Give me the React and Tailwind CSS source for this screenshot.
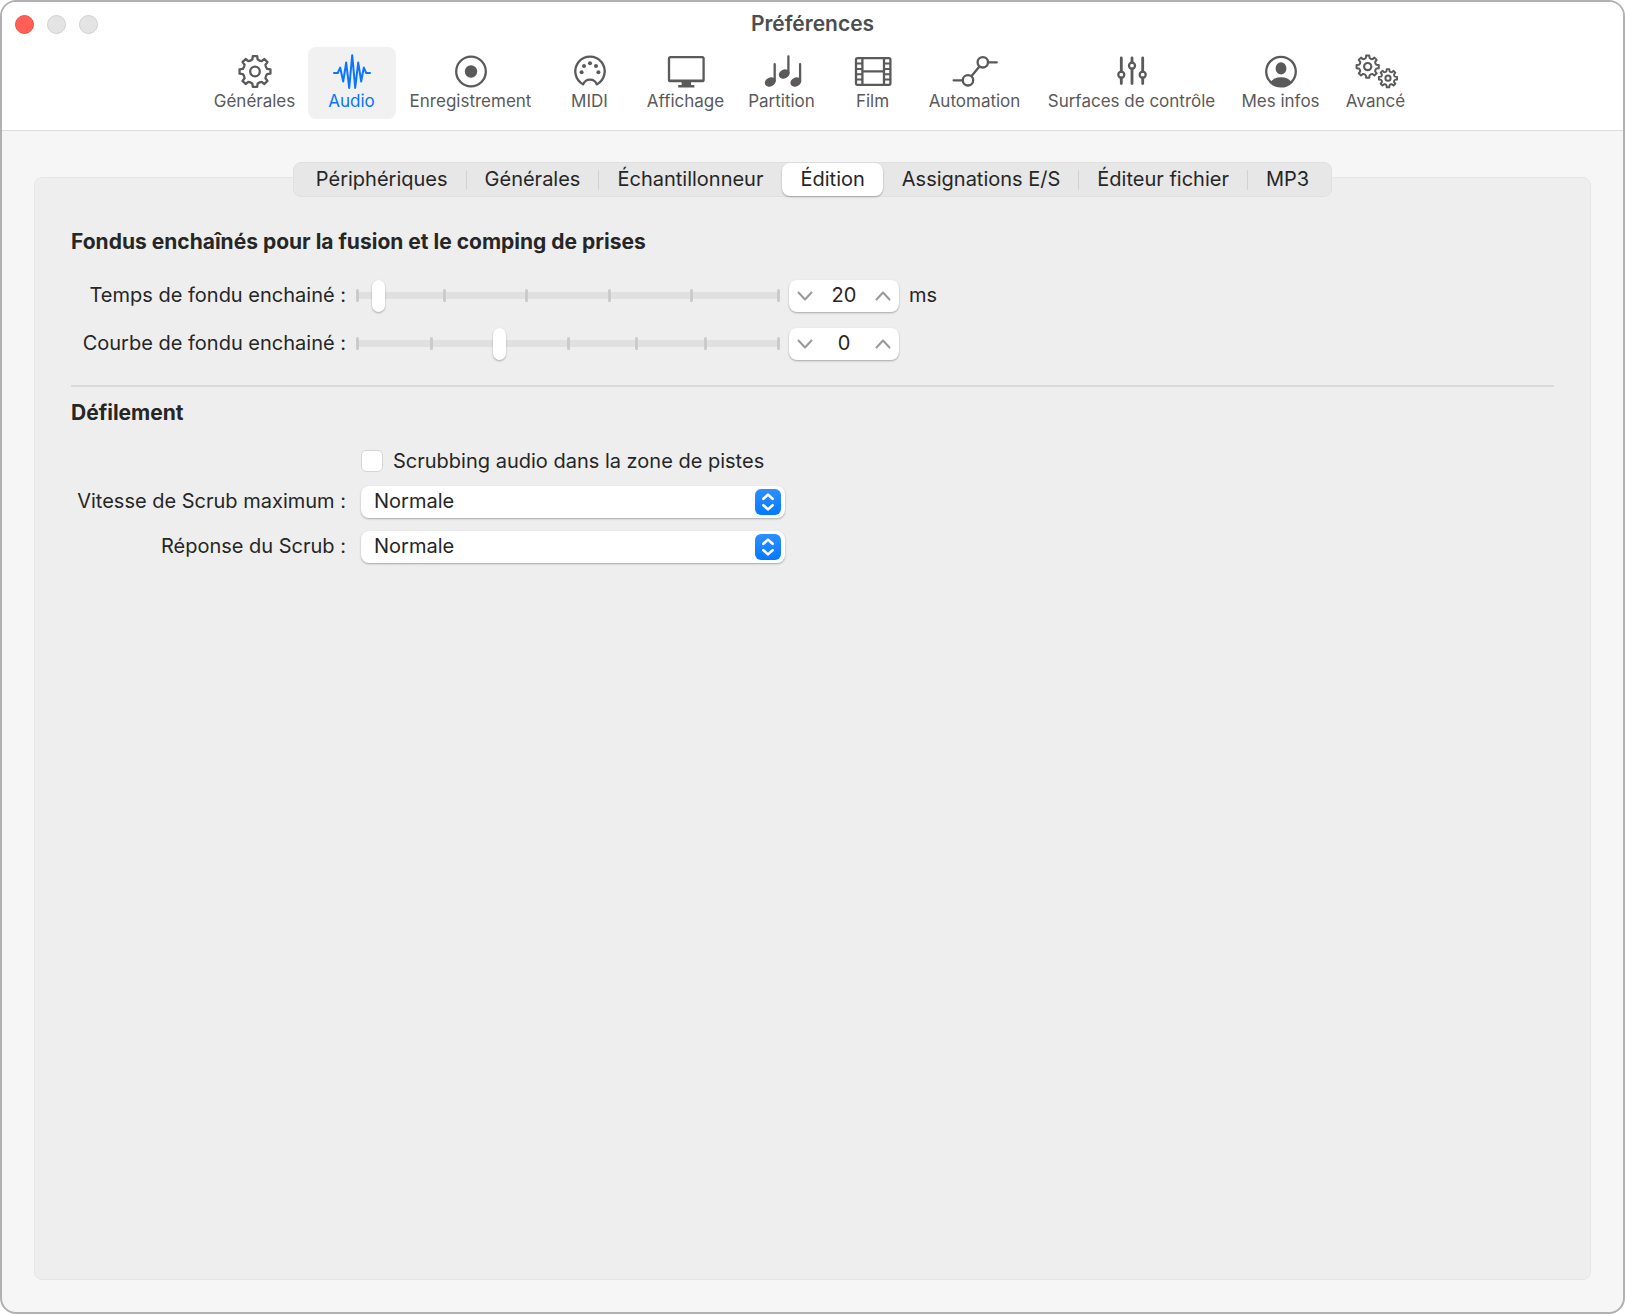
import React, { useState } from "react";

// outline of a cog: one rounded tooth per step, with a curved valley between two teeth
const gearPath = (cx, cy, outer, inner, teeth) => {
    const step = (Math.PI * 2) / teeth
    const point = (angle, r) => `${(cx + Math.sin(angle) * r).toFixed(2)} ${(cy - Math.cos(angle) * r).toFixed(2)}`
    let d = ""
    for (let i = 0; i < teeth; i++) {
        const a = i * step
        d += `${i === 0 ? "M" : "L"}${point(a - step * 0.27, inner)}`
        d += `L${point(a - step * 0.18, outer)}L${point(a + step * 0.18, outer)}`
        d += `L${point(a + step * 0.27, inner)}`
        d += `Q${point(a + step * 0.5, inner - 1)} ${point(a + step * 0.73, inner)}`
    }
    return d + "Z"
}

function Icon({ children }) {
    return (
        <svg className="w-12 h-10" viewBox="0 0 48 40" fill="none" stroke="currentColor" strokeWidth="2.3"
            strokeLinecap="round" strokeLinejoin="round" aria-hidden="true">
            {children}
        </svg>
    );
}

const GearIcon = () => (
    <Icon>
        <path d={gearPath(24, 20.5, 15.6, 12.4, 8)} />
        <circle cx="24" cy="20.5" r="4.8" />
    </Icon>
)

const WaveIcon = () => (
    <Icon>
        <path d="M6 22H9.8L12.2 16.6L15.2 30.5L18.2 11.5L21.2 37L24.2 4.2L27.2 37L30.2 11.5L33.2 30.5L35.8 16.6L38.2 22H42" strokeWidth="2" />
    </Icon>
)

const RecordIcon = () => (
    <Icon>
        <circle cx="24" cy="20.5" r="14.8" />
        <circle cx="24" cy="20.5" r="6.2" fill="currentColor" stroke="none" />
    </Icon>
)

const MidiIcon = () => (
    <Icon>
        <path d="M17.2 33.4A14.7 14.7 0 1 1 30.8 33.4C29.6 30 27.2 28.6 24 28.6C20.8 28.6 18.4 30 17.2 33.4Z" />
        <g fill="currentColor" stroke="none">
            <circle cx="15.6" cy="21.3" r="2" />
            <circle cx="18" cy="14.9" r="2" />
            <circle cx="24" cy="12.3" r="2" />
            <circle cx="30" cy="14.9" r="2" />
            <circle cx="32.4" cy="21.3" r="2" />
        </g>
    </Icon>
)

const DisplayIcon = () => (
    <Icon>
        <rect x="7" y="6.2" width="34.6" height="24" rx="1.5" />
        <path d="M7.5 29.6H41" />
        <path d="M19.6 31H29V34H32.4V36.4H16.2V34H19.6Z" fill="currentColor" stroke="none" />
    </Icon>
)

const NotesIcon = () => (
    <Icon>
        <g fill="currentColor" stroke="none">
            <ellipse cx="12.2" cy="31" rx="5.6" ry="4.4" transform="rotate(-24 12.2 31)" />
            <ellipse cx="26.2" cy="23" rx="5.6" ry="4.4" transform="rotate(-24 26.2 23)" />
            <ellipse cx="37.8" cy="31" rx="5.6" ry="4.4" transform="rotate(-24 37.8 31)" />
        </g>
        <path d="M16.7 13.2V30M30.4 5.4V22M42.1 13.2V30" />
    </Icon>
)

const FilmIcon = () => (
    <Icon>
        <rect x="7" y="7.2" width="34.4" height="26.6" rx="1.5" />
        <path d="M13.4 7.2V33.8M35 7.2V33.8M13.4 20.4H35" />
        <path d="M7 12.6H13M7 17.9H13M7 23.2H13M7 28.5H13M35.4 12.6H41M35.4 17.9H41M35.4 23.2H41M35.4 28.5H41" strokeWidth="2" />
    </Icon>
)

const AutomationIcon = () => (
    <Icon>
        <circle cx="17" cy="29.3" r="5.2" />
        <circle cx="31.8" cy="11.3" r="5.2" />
        <path d="M2.6 29.3H11.8M37 11.3H45.8M20.4 25.2L28.4 15.4" />
    </Icon>
)

const FadersIcon = () => (
    <Icon>
        <path d="M13.3 7V20.6M13.3 26.8V32.6M24 7V11.6M24 17.8V32.6M34.7 7V20.6M34.7 26.8V32.6" strokeWidth="2.8" />
        <circle cx="13.3" cy="23.7" r="3" />
        <circle cx="24" cy="14.7" r="3" />
        <circle cx="34.7" cy="23.7" r="3" />
    </Icon>
)

const PersonIcon = () => (
    <Icon>
        <circle cx="24" cy="20.6" r="14.8" />
        <ellipse cx="24" cy="17.4" rx="5.4" ry="6.2" fill="currentColor" stroke="none" />
        <path d="M13.6 31C15.6 28 19.4 26.2 24 26.2C28.6 26.2 32.4 28 34.4 31C31.8 34 28.2 35.4 24 35.4C19.8 35.4 16.2 34 13.6 31Z" fill="currentColor" stroke="none" />
    </Icon>
)

const AdvancedIcon = () => (
    <Icon>
        <path d={gearPath(15.7, 15.6, 11.2, 8.9, 8)} strokeWidth="2" />
        <circle cx="15.7" cy="15.6" r="3.6" strokeWidth="2.2" />
        <path d={gearPath(36, 27.2, 9.2, 7.2, 8)} strokeWidth="1.9" />
        <circle cx="36" cy="27.2" r="2.6" strokeWidth="2" />
    </Icon>
)

const sections = [
    { label: "Générales", icon: GearIcon, width: "w-[96px]" },
    { label: "Audio", icon: WaveIcon, width: "w-[98px]" },
    { label: "Enregistrement", icon: RecordIcon, width: "w-[140px]" },
    { label: "MIDI", icon: MidiIcon, width: "w-[98px]" },
    { label: "Affichage", icon: DisplayIcon, width: "w-[94px]" },
    { label: "Partition", icon: NotesIcon, width: "w-[98px]" },
    { label: "Film", icon: FilmIcon, width: "w-[84px]" },
    { label: "Automation", icon: AutomationIcon, width: "w-[120px]" },
    { label: "Surfaces de contrôle", icon: FadersIcon, width: "w-[194px]" },
    { label: "Mes infos", icon: PersonIcon, width: "w-[104px]" },
    { label: "Avancé", icon: AdvancedIcon, width: "w-[86px]" },
]

const tabs = ["Périphériques", "Générales", "Échantillonneur", "Édition", "Assignations E/S", "Éditeur fichier", "MP3"]

function Toolbar({ active, onSelect }) {
    return (
        <nav className="flex justify-center pb-[11px]">
            {sections.map(({ label, icon: SectionIcon, width }) => (
                <div key={label} className={`px-[5px] shrink-0 ${width}`}>
                    <button type="button" onClick={() => onSelect(label)}
                        className={`w-full h-[72px] pt-1 flex flex-col items-center rounded-lg text-[17px] leading-5 whitespace-nowrap ${label === active ? "bg-[#f1f1f1] text-[#0a75ff]" : "text-[#5a5a5a]"}`}>
                        <SectionIcon />
                        <span>{label}</span>
                    </button>
                </div>
            ))}
        </nav>
    );
}

function TabBar({ active, onSelect }) {
    const activeIndex = tabs.indexOf(active)
    return (
        <div role="tablist" className="relative z-10 flex h-[35px] px-1 rounded-lg bg-[#e7e7e7] border border-[#e0e0e0]">
            {tabs.map((tab, i) => (
                <React.Fragment key={tab}>
                    {i > 0 && (
                        <span className={`w-px h-5 self-center ${i === activeIndex || i === activeIndex + 1 ? "bg-transparent" : "bg-[#d2d2d2]"}`} />
                    )}
                    <button type="button" role="tab" aria-selected={tab === active} onClick={() => onSelect(tab)}
                        className={`px-[18px] pb-[2px] rounded-lg text-xl leading-6 whitespace-nowrap ${tab === active ? "bg-white shadow-[0_1px_2px_rgba(0,0,0,0.3)]" : ""}`}>
                        {tab}
                    </button>
                </React.Fragment>
            ))}
        </div>
    );
}

function Slider({ id, min, max, intervals, value, onChange }) {
    const marks = Array.from({ length: intervals + 1 }, (_, i) => i)
    return (
        <div className="relative w-[424px] h-8">
            <div className="absolute inset-x-0 top-3 h-[7px] bg-[#e0e0e0]" />
            <div className="absolute inset-x-0 top-[9px] h-[13px] flex justify-between">
                <span className="w-[3px] rounded-sm bg-[#cbcbcb]" />
                <span className="w-[3px] rounded-sm bg-[#cbcbcb]" />
            </div>
            {/* the inner marks follow the travel of the thumb, not the full track */}
            <div className="absolute inset-x-[5px] top-[9px] h-[13px] flex justify-between">
                {marks.map((i) => (
                    <span key={i} className={`w-[3px] rounded-sm ${i === 0 || i === intervals ? "" : "bg-[#cbcbcb]"}`} />
                ))}
            </div>
            <input id={id} type="range" min={min} max={max} value={value} onChange={(e) => onChange(Number(e.target.value))}
                className="absolute inset-0 w-full h-8 m-0 appearance-none bg-transparent [&::-webkit-slider-thumb]:appearance-none [&::-webkit-slider-thumb]:w-[13px] [&::-webkit-slider-thumb]:h-8 [&::-webkit-slider-thumb]:rounded-full [&::-webkit-slider-thumb]:bg-white [&::-webkit-slider-thumb]:shadow-[0_1px_2px_rgba(0,0,0,0.3)]" />
        </div>
    );
}

function Stepper({ label, value, onChange }) {
    return (
        <div className="w-[110px] h-8 flex items-center justify-between px-2 rounded-lg bg-white shadow-[0_1px_2px_rgba(0,0,0,0.3)]">
            <button type="button" aria-label="Diminuer" onClick={() => onChange(value - 1)}>
                <svg className="w-4 h-4" viewBox="0 0 16 16" fill="none" stroke="#999999" strokeWidth="2" strokeLinecap="round" strokeLinejoin="round">
                    <path d="M1.5 4.5L8 11.5L14.5 4.5" />
                </svg>
            </button>
            <input type="text" aria-label={label} value={value} onChange={(e) => onChange(Number(e.target.value) || 0)}
                className="w-12 pb-[2px] text-center text-xl leading-6 bg-transparent outline-none" />
            <button type="button" aria-label="Augmenter" onClick={() => onChange(value + 1)}>
                <svg className="w-4 h-4" viewBox="0 0 16 16" fill="none" stroke="#999999" strokeWidth="2" strokeLinecap="round" strokeLinejoin="round">
                    <path d="M1.5 11.5L8 4.5L14.5 11.5" />
                </svg>
            </button>
        </div>
    );
}

function SliderRow({ id, label, unit, ...slider }) {
    return (
        <div className="flex items-center">
            <label htmlFor={id} className="w-[275px] mr-[10px] pb-[2px] text-right whitespace-nowrap">{label}</label>
            <Slider id={id} {...slider} />
            <div className="ml-[9px]">
                <Stepper label={label} value={slider.value} onChange={slider.onChange} />
            </div>
            {unit && <span className="ml-[10px] pb-[2px]">{unit}</span>}
        </div>
    );
}

function SelectRow({ id, label }) {
    return (
        <div className="flex items-center">
            <label htmlFor={id} className="w-[275px] mr-[15px] pb-[2px] text-right whitespace-nowrap">{label}</label>
            <div className="relative w-[424px] h-8">
                <select id={id} defaultValue="Normale"
                    className="w-full h-8 pl-[13px] pr-10 pb-[2px] appearance-none rounded-lg bg-white text-xl leading-6 shadow-[0_1px_2px_rgba(0,0,0,0.3)]">
                    <option>Lente</option>
                    <option>Normale</option>
                    <option>Rapide</option>
                </select>
                <span className="absolute right-1 top-[3px] w-[26px] h-[26px] rounded-md bg-linear-to-b from-[#2c8fff] to-[#0079ff] pointer-events-none">
                    <svg className="w-[26px] h-[26px]" viewBox="0 0 26 26" fill="none" stroke="white" strokeWidth="2.6" strokeLinecap="round" strokeLinejoin="round">
                        <path d="M8.4 9.8L13 5.6L17.6 9.8M8.4 16.2L13 20.4L17.6 16.2" />
                    </svg>
                </span>
            </div>
        </div>
    );
}

export default function App() {
    const [section, setSection] = useState("Audio")
    const [tab, setTab] = useState("Édition")
    const [fadeTime, setFadeTime] = useState(20)
    const [fadeCurve, setFadeCurve] = useState(0)

    return (
        <div className="min-h-screen bg-white flex flex-col font-[Inter,sans-serif] text-[#262626]">
            <div className="flex-1 flex flex-col border-2 border-[#b1b1b1] rounded-2xl overflow-hidden bg-[#f6f6f6]">
                <header className="bg-white border-b border-[#dcdcdc]">
                    <div className="h-[45px] px-[13px] grid grid-cols-[1fr_auto_1fr] items-center">
                        <div className="flex gap-[13px]">
                            <button type="button" aria-label="Fermer" className="w-[19px] h-[19px] rounded-full bg-[#ff5f57] border border-[#ee5048]" />
                            <button type="button" aria-label="Réduire" className="w-[19px] h-[19px] rounded-full bg-[#e4e4e4] border border-[#d0d0d0]" />
                            <button type="button" aria-label="Agrandir" className="w-[19px] h-[19px] rounded-full bg-[#e4e4e4] border border-[#d0d0d0]" />
                        </div>
                        <h1 className="pb-[2px] text-[21px] leading-6 font-semibold text-[#4d4d4d]">Préférences</h1>
                    </div>
                    <Toolbar active={section} onSelect={setSection} />
                </header>

                <main className="flex-1 flex flex-col px-8 pt-[31px] pb-8 text-xl leading-6">
                    <div className="flex justify-center">
                        <TabBar active={tab} onSelect={setTab} />
                    </div>
                    <div role="tabpanel" className="flex-1 -mt-5 px-9 pt-[52px] rounded-lg bg-[#eeeeee] border border-[#e6e6e6]">
                        <section className="pb-[25px] border-b-2 border-[#dadada]">
                            <h2 className="text-[21px] font-bold">Fondus enchaînés pour la fusion et le comping de prises</h2>
                            <div className="mt-[26px] flex flex-col gap-4">
                                <SliderRow id="fade-time" label="Temps de fondu enchainé :" unit="ms" min={0} max={500} intervals={5}
                                    value={fadeTime} onChange={setFadeTime} />
                                <SliderRow id="fade-curve" label="Courbe de fondu enchainé :" min={-50} max={100} intervals={6}
                                    value={fadeCurve} onChange={setFadeCurve} />
                            </div>
                        </section>
                        <section className="pt-[14px]">
                            <h2 className="text-[21px] font-bold">Défilement</h2>
                            <div className="mt-6 mb-[13px] ml-[290px] flex items-center gap-[10px]">
                                <input id="scrubbing" type="checkbox"
                                    className="w-[22px] h-[22px] appearance-none rounded-[5px] bg-white border border-[#d6d6d6] checked:bg-[#0079ff]" />
                                <label htmlFor="scrubbing">Scrubbing audio dans la zone de pistes</label>
                            </div>
                            <div className="flex flex-col gap-[13px]">
                                <SelectRow id="scrub-speed" label="Vitesse de Scrub maximum :" />
                                <SelectRow id="scrub-response" label="Réponse du Scrub :" />
                            </div>
                        </section>
                    </div>
                </main>
            </div>
        </div>
    );
}
